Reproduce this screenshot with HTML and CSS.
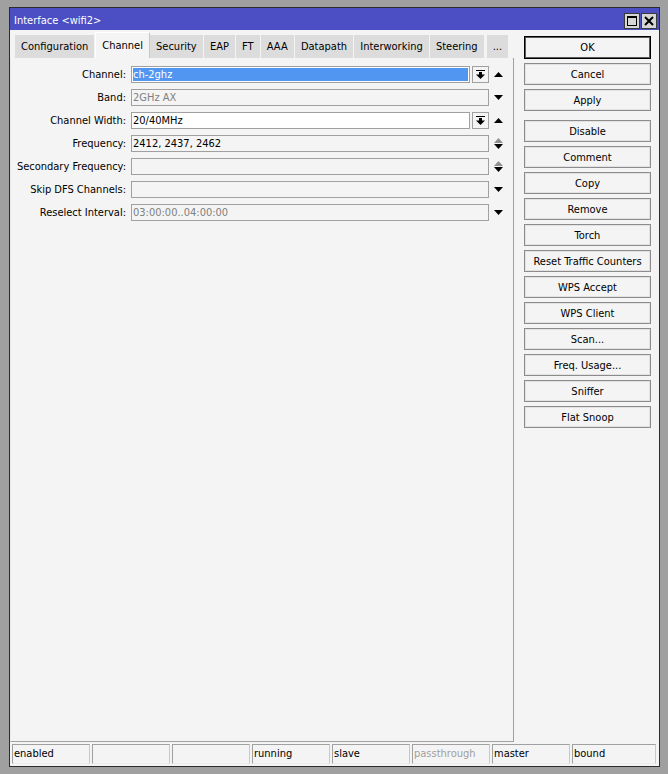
FILE: index.html
```html
<!DOCTYPE html>
<html>
<head>
<meta charset="utf-8">
<link rel="stylesheet" href="styles.css">
</head>
<body>
<div class="win">
  <div class="title">
    <span class="title-text">Interface &lt;wifi2&gt;</span>
    <div class="ctrls">
      <div class="ctrl"><svg width="10" height="10" viewBox="0 0 10 10"><rect x="0.5" y="0.5" width="9" height="9" fill="none" stroke="#000" stroke-width="1"/><rect x="0" y="0" width="10" height="2" fill="#000"/></svg></div>
      <div class="ctrl"><svg width="10" height="10" viewBox="0 0 10 10"><path d="M1 1 L9 9 M9 1 L1 9" stroke="#000" stroke-width="2"/></svg></div>
    </div>
  </div>
  <div class="body">
    <div class="main">
      <div class="left">
        <div class="tabs">
          <div class="tab">Configuration</div>
          <div class="tab active">Channel</div>
          <div class="tab">Security</div>
          <div class="tab">EAP</div>
          <div class="tab">FT</div>
          <div class="tab">AAA</div>
          <div class="tab">Datapath</div>
          <div class="tab">Interworking</div>
          <div class="tab">Steering</div>
          <div class="tab more">...</div>
        </div>
        <div class="panel">
          <div class="form">
            <div class="lbl">Channel:</div>
            <div class="fld-wrap">
              <div class="fld sel">ch-2ghz</div>
              <div class="dd"><svg width="9" height="9" viewBox="0 0 9 9"><rect x="0" y="0" width="9" height="1" fill="#000"/><rect x="3" y="2" width="3" height="3" fill="#000"/><path d="M0 4.5 H9 L4.5 9 Z" fill="#000"/></svg></div>
            </div>
            <div class="arr"><svg class="tri" viewBox="0 0 9 5"><path d="M4.5 0 L9 5 H0 Z" fill="#000"/></svg></div>

            <div class="lbl">Band:</div>
            <div class="fld-wrap"><div class="fld dis">2GHz AX</div></div>
            <div class="arr"><svg class="tri" viewBox="0 0 9 5"><path d="M0 0 H9 L4.5 5 Z" fill="#000"/></svg></div>

            <div class="lbl">Channel Width:</div>
            <div class="fld-wrap">
              <div class="fld white">20/40MHz</div>
              <div class="dd"><svg width="9" height="9" viewBox="0 0 9 9"><rect x="0" y="0" width="9" height="1" fill="#000"/><rect x="3" y="2" width="3" height="3" fill="#000"/><path d="M0 4.5 H9 L4.5 9 Z" fill="#000"/></svg></div>
            </div>
            <div class="arr"><svg class="tri" viewBox="0 0 9 5"><path d="M4.5 0 L9 5 H0 Z" fill="#000"/></svg></div>

            <div class="lbl">Frequency:</div>
            <div class="fld-wrap"><div class="fld">2412, 2437, 2462</div></div>
            <div class="arr dbl"><svg class="tri" viewBox="0 0 9 5"><path d="M4.5 0 L9 5 H0 Z" fill="#909090"/></svg><svg class="tri" viewBox="0 0 9 5"><path d="M0 0 H9 L4.5 5 Z" fill="#000"/></svg></div>

            <div class="lbl">Secondary Frequency:</div>
            <div class="fld-wrap"><div class="fld"></div></div>
            <div class="arr dbl"><svg class="tri" viewBox="0 0 9 5"><path d="M4.5 0 L9 5 H0 Z" fill="#909090"/></svg><svg class="tri" viewBox="0 0 9 5"><path d="M0 0 H9 L4.5 5 Z" fill="#000"/></svg></div>

            <div class="lbl">Skip DFS Channels:</div>
            <div class="fld-wrap"><div class="fld"></div></div>
            <div class="arr"><svg class="tri" viewBox="0 0 9 5"><path d="M0 0 H9 L4.5 5 Z" fill="#000"/></svg></div>

            <div class="lbl">Reselect Interval:</div>
            <div class="fld-wrap"><div class="fld dis">03:00:00..04:00:00</div></div>
            <div class="arr"><svg class="tri" viewBox="0 0 9 5"><path d="M0 0 H9 L4.5 5 Z" fill="#000"/></svg></div>
          </div>
        </div>
      </div>
      <div class="buttons">
        <div class="btn def">OK</div>
        <div class="btn">Cancel</div>
        <div class="btn">Apply</div>
        <div class="btn sep">Disable</div>
        <div class="btn">Comment</div>
        <div class="btn">Copy</div>
        <div class="btn">Remove</div>
        <div class="btn">Torch</div>
        <div class="btn">Reset Traffic Counters</div>
        <div class="btn">WPS Accept</div>
        <div class="btn">WPS Client</div>
        <div class="btn">Scan...</div>
        <div class="btn">Freq. Usage...</div>
        <div class="btn">Sniffer</div>
        <div class="btn">Flat Snoop</div>
      </div>
    </div>
    <div class="status">
      <div class="cell">enabled</div>
      <div class="cell"></div>
      <div class="cell"></div>
      <div class="cell">running</div>
      <div class="cell">slave</div>
      <div class="cell dim">passthrough</div>
      <div class="cell">master</div>
      <div class="cell last">bound</div>
    </div>
  </div>
</div>
</body>
</html>
```

FILE: styles.css
```css
* { box-sizing: border-box; }

html, body {
  margin: 0;
  padding: 0;
}

body {
  width: 668px;
  height: 774px;
  overflow: hidden;
  background: #a0a0a0;
  font-family: "DejaVu Sans Condensed", "DejaVu Sans", sans-serif;
  font-stretch: condensed;
  font-size: 11px;
  color: #000;
}

.win {
  margin: 7px 0 0 9px;
  width: 651px;
  height: 760px;
  border: 1px solid #2c2c2c;
  display: flex;
  flex-direction: column;
  background: #f4f4f4;
}

.title {
  height: 22px;
  flex: none;
  background: #4b4fc3;
  color: #fff;
  display: flex;
  align-items: center;
  justify-content: space-between;
  padding: 3px 2px 0 4px;
}

.title-text {
  line-height: 19px;
}

.ctrls {
  display: flex;
  gap: 1px;
}

.ctrl {
  width: 16px;
  height: 16px;
  background: #d6d6d6;
  border: 1px solid #3a3a3a;
  display: flex;
  align-items: center;
  justify-content: center;
}

.body {
  flex: 1;
  display: flex;
  flex-direction: column;
  min-height: 0;
}

.main {
  flex: 1;
  display: flex;
  gap: 10px;
  padding: 2px 8px 0 0;
  min-height: 0;
}

.left {
  width: 504px;
  display: flex;
  flex-direction: column;
}

.tabs {
  height: 26px;
  flex: none;
  display: flex;
  align-items: flex-end;
  padding-left: 5px;
}

.tab {
  height: 23px;
  line-height: 24px;
  padding: 0 6.1px;
  background: #dcdcdc;
  border-right: 1px solid #f4f4f4;
  white-space: nowrap;
}

.tab.active {
  height: 26px;
  line-height: 25px;
  background: #f4f4f4;
  border-top: 1px solid #ffffff;
  border-left: 1px solid #ffffff;
  border-right: 1px solid #c8c8c8;
  padding: 0 6px;
}

.tab.more {
  margin-left: 2px;
  padding: 0 6px;
}

.panel {
  flex: 1;
  border-right: 1px solid #a0a0a0;
  border-bottom: 1px solid #a0a0a0;
  border-left: 1px solid #ececec;
}

.form {
  display: grid;
  grid-template-columns: 116px 358px 24px;
  column-gap: 4px;
  row-gap: 6px;
  padding-top: 8px;
}

.lbl {
  text-align: right;
  line-height: 17px;
  height: 17px;
  white-space: nowrap;
  padding-right: 1px;
}

.fld-wrap {
  display: flex;
  gap: 2px;
  height: 17px;
}

.fld {
  flex: 1;
  height: 17px;
  border: 1px solid #a0a0a0;
  background: #f4f4f4;
  line-height: 15px;
  padding: 0 1px;
  white-space: nowrap;
  overflow: hidden;
}

.fld.sel {
  background: #5196f0;
  color: #fff;
  box-shadow: inset 0 0 0 1px #fff;
}

.fld.white {
  background: #fff;
}

.fld.dis {
  color: #808080;
}

.dd {
  width: 17px;
  height: 17px;
  flex: none;
  border: 1px solid #a0a0a0;
  background: #f4f4f4;
  display: flex;
  align-items: center;
  justify-content: center;
}

.arr {
  display: flex;
  flex-direction: column;
  align-items: flex-start;
  justify-content: center;
  padding-left: 1px;
  height: 17px;
  gap: 1px;
}

.tri {
  width: 9px;
  height: 5px;
  display: block;
}

.buttons {
  width: 127px;
  flex: none;
  display: flex;
  flex-direction: column;
  gap: 4px;
  padding-top: 4px;
}

.btn {
  height: 22px;
  flex: none;
  border: 1px solid #8c8c8c;
  box-shadow: inset 0 0 0 1px #e2e2e2;
  background: #f4f4f4;
  text-align: center;
  line-height: 21px;
  white-space: nowrap;
}

.btn.def {
  height: 23px;
  line-height: 21px;
  border: 1px solid #000;
  box-shadow: inset 0 0 0 1px #5a5a5a;
}

.btn.sep {
  margin-top: 5px;
}

.status {
  height: 24px;
  flex: none;
  display: flex;
  gap: 2px;
  padding: 2px 3px 2px 2px;
}

.cell {
  width: 78px;
  height: 20px;
  border-top: 1px solid #a0a0a0;
  border-left: 1px solid #a0a0a0;
  border-right: 1px solid #c8c8c8;
  border-bottom: 1px solid #ececec;
  line-height: 18px;
  padding-left: 1px;
  white-space: nowrap;
}

.cell.last {
  flex: 1;
}

.cell.dim {
  color: #a0a0a0;
}
```
